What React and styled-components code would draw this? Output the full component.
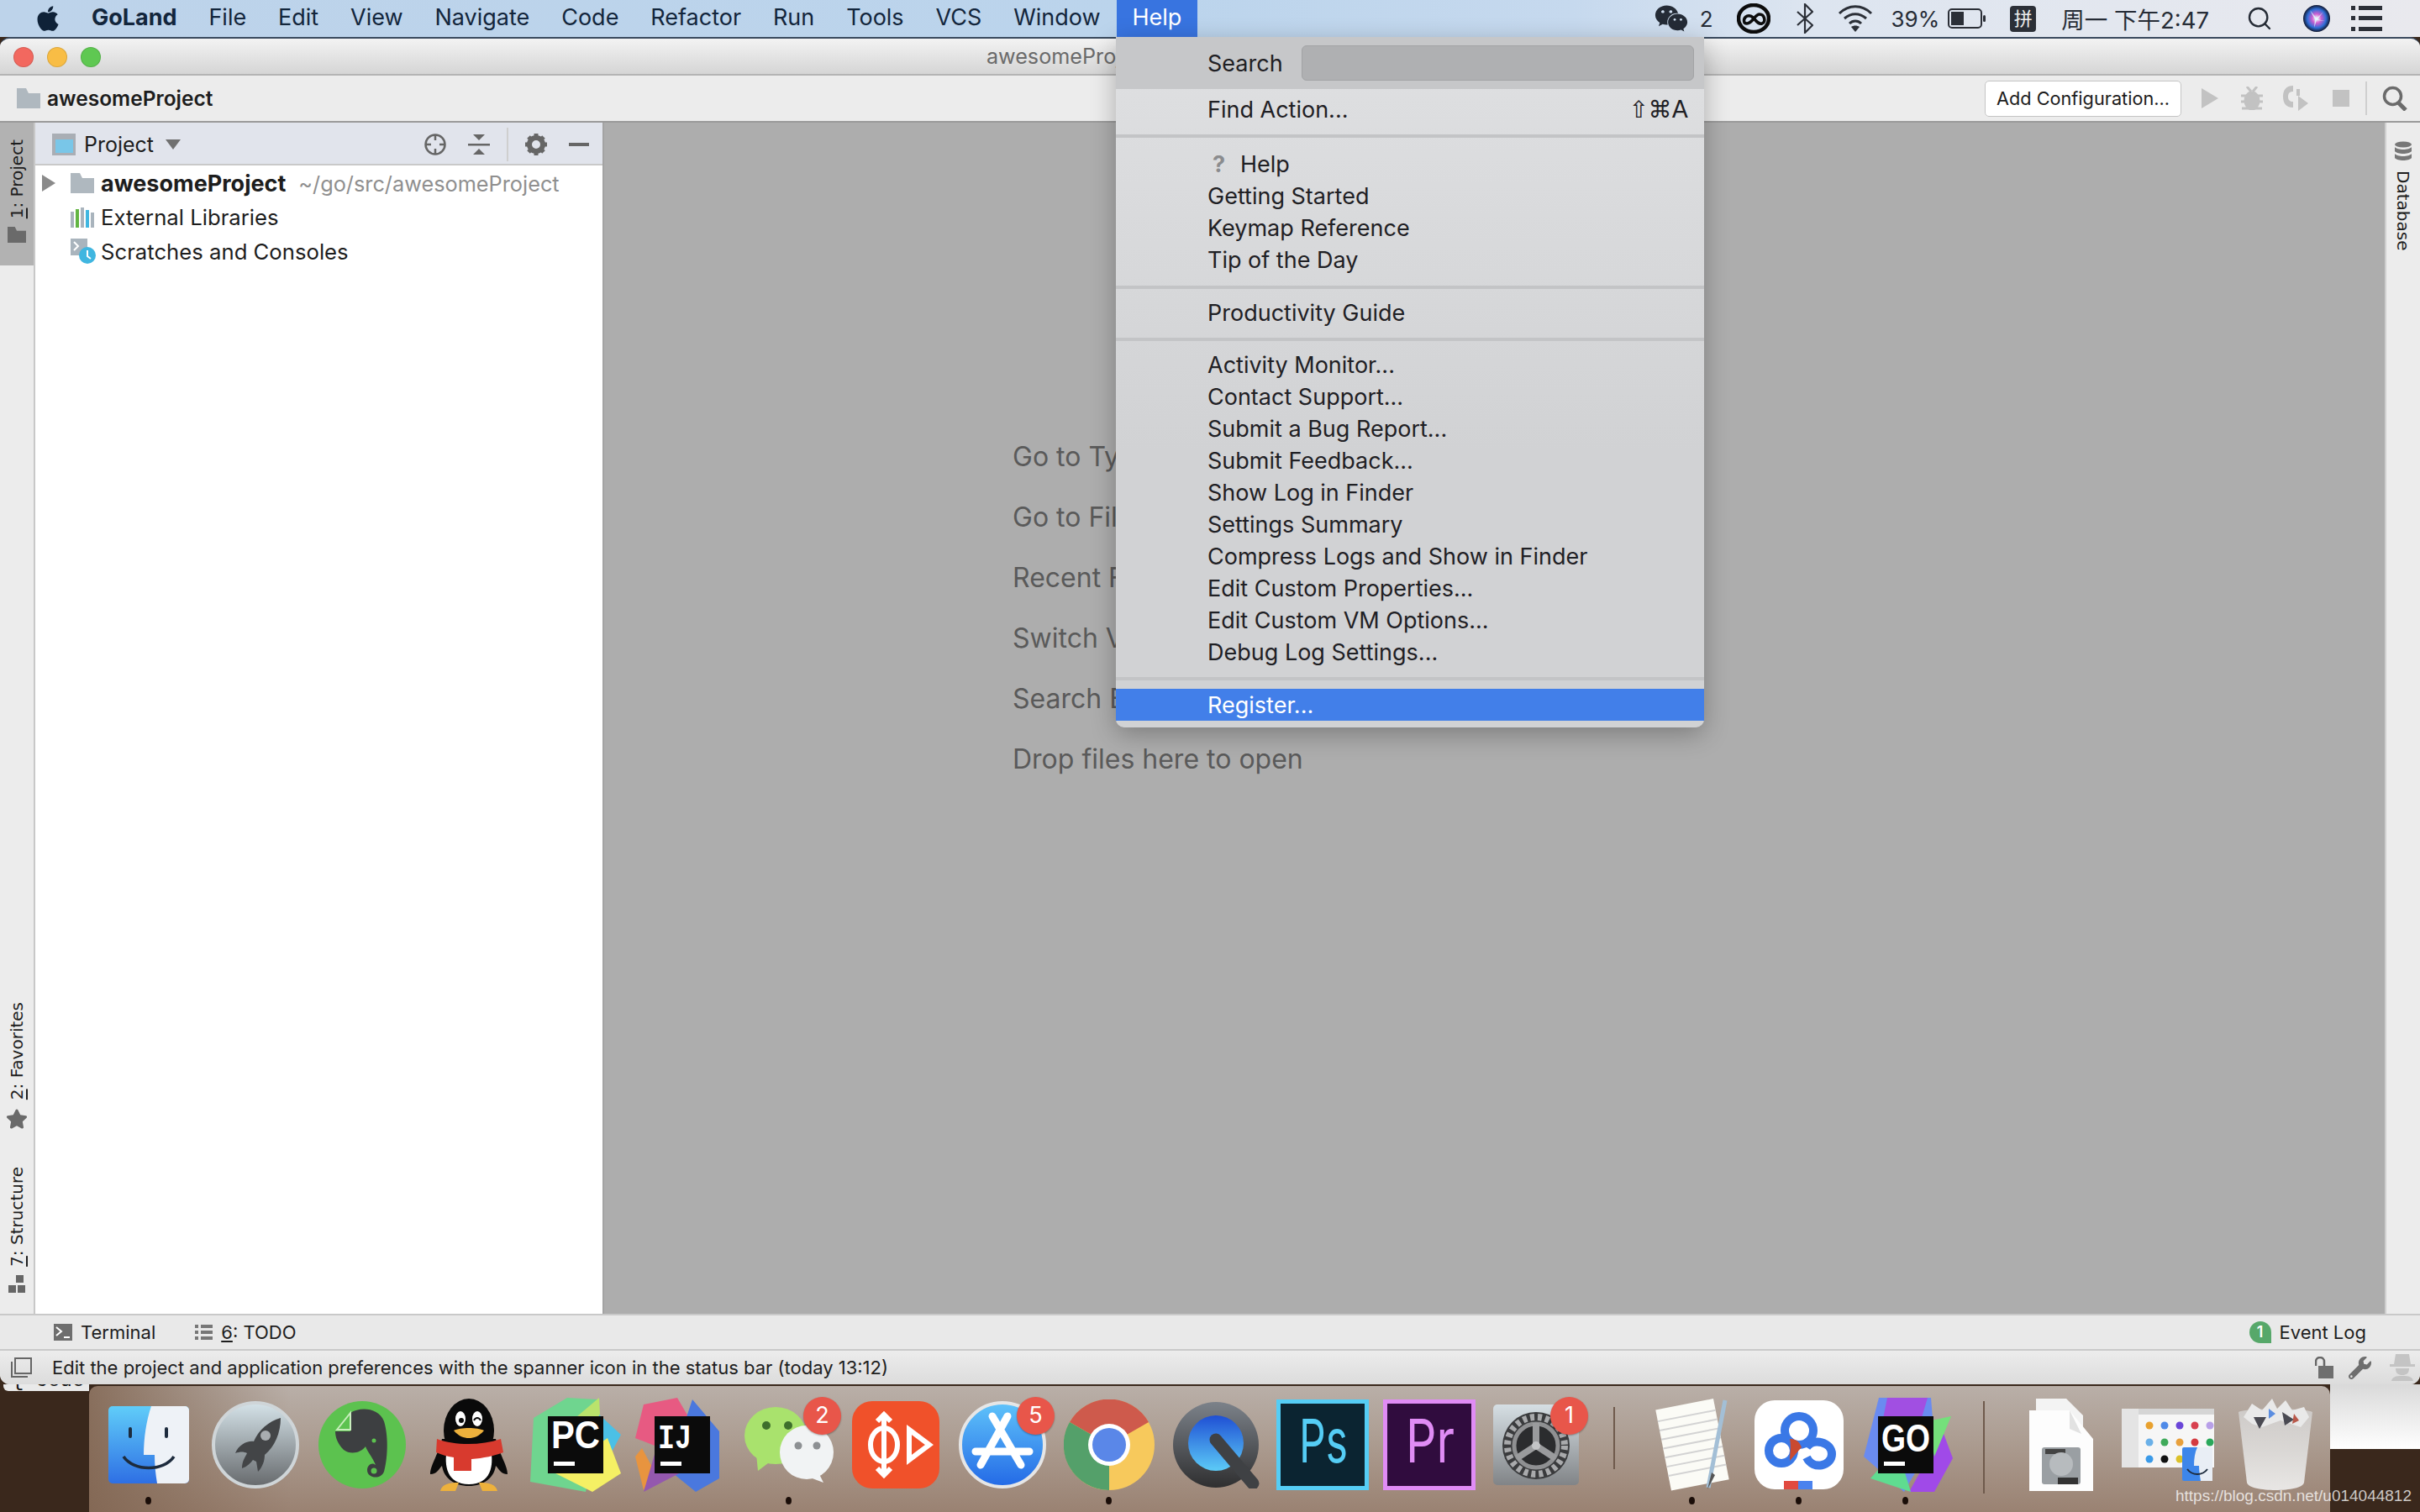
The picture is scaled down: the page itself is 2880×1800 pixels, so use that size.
import React from "react";
import styled, { createGlobalStyle } from "styled-components";
import { FaApple, FaWeixin, FaWrench, FaStar } from "react-icons/fa";
import { Search } from "lucide-react";

const GlobalStyle = createGlobalStyle`
  html, body { margin: 0; padding: 0; background: #3a281c; }
  * { box-sizing: border-box; }
  body { font-family: Inter, "Noto Sans CJK SC", sans-serif; }
`;

const Desktop = styled.div`
  position: relative;
  width: 2880px;
  height: 1800px;
  overflow: hidden;
  display: flex;
  flex-direction: column;
`;

/* ---- mac menu bar ---- */
const MenuBar = styled.header`
  height: 44px;
  flex: none;
  display: flex;
  align-items: center;
  padding-left: 40px;
  background: linear-gradient(90deg, #bdd3ea 0%, #bbd4ec 48%, #c6d9ee 65%, #dde5f0 75%, #e9e9ee 100%);
  color: #13263c;
  font-size: 27px;
`;
const AppleBox = styled.span`
  display: flex;
  width: 50px;
  font-size: 34px;
  color: #0f2238;
`;
const MenuItem = styled.span`
  height: 44px;
  line-height: 42px;
  padding: 0 18.94px;
  font-weight: ${(p) => (p.$bold ? 700 : 400)};
  background: ${(p) => (p.$active ? "#3874e0" : "transparent")};
  color: ${(p) => (p.$active ? "#fff" : "inherit")};
`;
const Tray = styled.div`
  margin-left: auto;
  display: flex;
  align-items: center;
  height: 44px;
  padding-right: 45px;
  color: #262c36;
  font-size: 26px;
`;
const TrayItem = styled.span`
  display: flex;
  align-items: center;
  margin-left: ${(p) => p.$gap}px;
  white-space: nowrap;
`;
const ClockText = styled.span`
  font-size: 27.5px;
`;
const ImeBox = styled.span`
  width: 31px;
  height: 31px;
  border-radius: 4px;
  background: #2b2f37;
  color: #eee;
  font-size: 22px;
  text-align: center;
  line-height: 30px;
`;

/* ---- ide window ---- */
const Window = styled.main`
  flex: none;
  height: 1604px;
  display: flex;
  flex-direction: column;
  background: #ececec;
  border-top: 2px solid #39495d;
  border-radius: 12px;
  overflow: hidden;
`;
const TitleBar = styled.div`
  position: relative;
  flex: none;
  height: 44px;
  display: flex;
  align-items: center;
  justify-content: center;
  background: linear-gradient(180deg, #f3f3f3, #d5d5d5);
  border-bottom: 2px solid #b4b4b4;
  color: #6b6b6b;
  font-size: 25.2px;
`;
const Lights = styled.div`
  position: absolute;
  left: 16px;
  top: 10px;
  display: flex;
  gap: 16px;
`;
const Light = styled.span`
  width: 24px;
  height: 24px;
  border-radius: 50%;
  background: ${(p) => p.$color};
  box-shadow: inset 0 0 0 1px rgba(0, 0, 0, 0.12);
`;
const Toolbar = styled.div`
  flex: none;
  height: 56px;
  display: flex;
  align-items: center;
  padding-left: 20px;
  background: #ececec;
  border-bottom: 2px solid #9a9a9a;
`;
const Crumb = styled.span`
  margin-left: 8px;
  font-size: 24.5px;
  font-weight: 600;
  color: #1d1d1d;
`;
const ToolbarRight = styled.div`
  margin-left: auto;
  display: flex;
  align-items: center;
  padding-right: 15px;
`;
const ConfigButton = styled.button`
  width: 234px;
  height: 43px;
  padding: 0;
  background: #fff;
  border: 1px solid #c4c4c4;
  border-radius: 5px;
  font: 400 21.7px Inter, sans-serif;
  color: #1c1c1c;
`;
const ToolIcon = styled.span`
  display: flex;
  margin-left: ${(p) => p.$gap}px;
`;
const VDivider = styled.span`
  width: 2px;
  height: 40px;
  background: #cfcfcf;
  margin: 0 ${(p) => p.$right}px 0 ${(p) => p.$left}px;
`;

const Body = styled.div`
  flex: 1;
  min-height: 0;
  display: flex;
`;
const Stripe = styled.aside`
  flex: none;
  width: 42px;
  background: #ececec;
  display: flex;
  flex-direction: column;
  ${(p) => (p.$right ? "border-left: 2px solid #cfcfcf;" : "border-right: 2px solid #c8c8c8;")}
`;
const StripeTab = styled.div`
  display: flex;
  flex-direction: column-reverse;
  align-items: center;
  gap: 10px;
  width: 40px;
  padding: 20px 0 ${(p) => p.$pb ?? 0}px;
  background: ${(p) => (p.$active ? "#b2b2b2" : "transparent")};
`;
const StripeBottom = styled.div`
  margin-top: auto;
  display: flex;
  flex-direction: column;
`;
const StripeLabel = styled.span`
  writing-mode: vertical-rl;
  transform: rotate(180deg);
  font: 400 20px "DejaVu Sans", sans-serif;
  color: #1e1e1e;
  white-space: nowrap;
`;
const RightTab = styled.div`
  display: flex;
  flex-direction: column;
  align-items: center;
  gap: 11px;
  padding-top: 22px;
`;
const RightLabel = styled.span`
  writing-mode: vertical-rl;
  font: 400 20px "DejaVu Sans", sans-serif;
  color: #1e1e1e;
`;
const Panel = styled.section`
  flex: none;
  width: 677px;
  display: flex;
  flex-direction: column;
  background: #fff;
  border-right: 2px solid #a3a3a3;
`;
const PanelHead = styled.div`
  flex: none;
  height: 51px;
  display: flex;
  align-items: center;
  padding: 2px 0 0 20px;
  background: #e1e4ec;
  border-bottom: 2px solid #c9c9c9;
  font-size: 25px;
  color: #1c1c1c;
`;
const PanelTitle = styled.span`
  margin-left: 10px;
`;
const PanelTools = styled.div`
  margin-left: auto;
  display: flex;
  align-items: center;
  padding-right: 16px;
`;
const Tree = styled.div`
  padding-top: 1px;
`;
const TreeRow = styled.div`
  height: 40.5px;
  display: flex;
  align-items: center;
  padding-left: ${(p) => (p.$root ? 8 : 42)}px;
  color: #1d1d1d;
  white-space: nowrap;
`;
const TreeArrow = styled.span`
  width: 0;
  height: 0;
  margin-right: 18px;
  border-left: 16px solid #8a8a8a;
  border-top: 10px solid transparent;
  border-bottom: 10px solid transparent;
`;
const TreeName = styled.span`
  margin-left: ${(p) => p.$left ?? 8}px;
  font-weight: ${(p) => (p.$bold ? 700 : 400)};
  font-size: ${(p) => (p.$bold ? 27 : 25.7)}px;
`;
const TreePath = styled.span`
  margin-left: 15px;
  font-size: 25.3px;
  color: #8f8f8f;
`;
const Editor = styled.div`
  flex: 1;
  background: #adadad;
  display: flex;
  flex-direction: column;
  gap: 34px;
  padding: 379px 0 0 486px;
  font-size: 32px;
  line-height: 38px;
  color: #5a5a5a;
`;
const ToolWindowBar = styled.div`
  flex: none;
  height: 42px;
  display: flex;
  align-items: center;
  padding: 0 64px;
  background: #e9e9e9;
  border-top: 2px solid #c9c9c9;
  font-size: 22px;
  color: #1e1e1e;
`;
const BarItem = styled.span`
  display: flex;
  align-items: center;
  gap: 10px;
  margin-left: ${(p) => p.$left};
`;
const EventBadge = styled.span`
  width: 26px;
  height: 26px;
  border-radius: 50% 50% 0 50%;
  background: #57a86a;
  color: #fff;
  font-size: 18px;
  font-weight: 600;
  text-align: center;
  line-height: 26px;
`;
const StatusBar = styled.footer`
  flex: none;
  height: 42px;
  display: flex;
  align-items: center;
  padding-left: 12px;
  background: linear-gradient(180deg, #ececec, #dcdcdc);
  border-top: 2px solid #c9c9c9;
  font-size: 22px;
  color: #202020;
`;
const StatusText = styled.span`
  margin-left: 24px;
`;
const StatusIcons = styled.div`
  margin-left: auto;
  display: flex;
  align-items: center;
  gap: 18px;
  padding-right: 2px;
`;

/* ---- help menu ---- */
const HelpMenu = styled.nav`
  position: absolute;
  left: 1328px;
  top: 44px;
  width: 700px;
  height: 822px;
  background: linear-gradient(180deg, #dfe0e2 0%, #d1d2d4 60%, #d1d2d4 100%);
  border-radius: 0 0 10px 10px;
  box-shadow: 0 8px 30px rgba(0, 0, 0, 0.28);
  color: #1f2024;
  font-size: 27px;
  z-index: 2;
`;
const MenuSearch = styled.div`
  height: 62px;
  display: flex;
  align-items: center;
  padding: 0 12px 0 109px;
  background: #c6c7c9;
`;
const SearchField = styled.div`
  margin-left: 22px;
  flex: 1;
  height: 42px;
  border-radius: 6px;
  background: #afb0b2;
  border: 1px solid #a2a3a5;
`;
const MenuGroup = styled.div`
  padding: ${(p) => p.$top}px 0 ${(p) => p.$bottom}px;
`;
const MenuSep = styled.div`
  height: 4px;
  background: #c3c4c6;
`;
const MenuRow = styled.div`
  height: 38px;
  display: flex;
  align-items: center;
  padding: 0 19px 0 109px;
  white-space: nowrap;
  background: ${(p) => (p.$selected ? "#427fe9" : "transparent")};
  color: ${(p) => (p.$selected ? "#fff" : "inherit")};
`;
const HelpMark = styled.span`
  width: 39px;
  padding-left: 6px;
  font-weight: 700;
  color: #8b8c8e;
`;
const Shortcut = styled.span`
  margin-left: auto;
  font-family: "DejaVu Sans", sans-serif;
  font-size: 28px;
`;

/* ---- dock ---- */
const Wallpaper = styled.div`
  position: relative;
  flex: 1;
  background: linear-gradient(180deg, #d9d9d9, #fff) right top / 107px 77px no-repeat, #3a281c;
`;
const BackWindow = styled.div`
  position: absolute;
  left: 4px;
  top: 0;
  width: 102px;
  height: 8px;
  overflow: hidden;
  background: #e9e9e9;
  border-radius: 0 0 0 6px;
  font: 24px/1 "Liberation Mono", monospace;
  color: #111;
  padding-left: 10px;
`;
const BackText = styled.div`
  margin-top: -16px;
`;
const Dock = styled.div`
  margin: 2px 0 0 106px;
  width: 2667px;
  height: 150px;
  display: flex;
  padding-left: 7px;
  border-radius: 10px 10px 0 0;
  background:
    linear-gradient(90deg, rgba(128, 100, 80, 0.85) 0, rgba(128, 100, 80, 0) 9%),
    linear-gradient(180deg, #b9afa8 0%, #ad9e93 40%, #9a8272 100%);
`;
const DockCell = styled.div`
  position: relative;
  flex: none;
  width: 127px;
  display: flex;
  flex-direction: column;
  align-items: center;
`;
const DockIconBox = styled.div`
  height: 132px;
  padding-top: 8px;
  display: flex;
  align-items: center;
  justify-content: center;
`;
const RunDot = styled.span`
  width: 7px;
  height: 9px;
  border-radius: 50%;
  background: #1a0d08;
`;
const DockBadge = styled.span`
  position: absolute;
  left: 81px;
  top: 13px;
  width: 45px;
  height: 45px;
  border-radius: 50%;
  background: #e8564a;
  color: #fff;
  font-size: 27px;
  text-align: center;
  line-height: 44px;
  box-shadow: 0 1px 2px rgba(0, 0, 0, 0.3);
`;
const DockSep = styled.div`
  flex: none;
  width: 59px;
  display: flex;
  justify-content: center;
  align-items: center;
  padding-bottom: ${(p) => (p.$short ? 26 : 4)}px;
`;
const DockSepLine = styled.span`
  width: 2px;
  height: ${(p) => p.$h}px;
  background: #6f5a4c;
`;
const Watermark = styled.span`
  position: absolute;
  right: 10px;
  bottom: 8px;
  font: 19px "Liberation Sans", sans-serif;
  color: rgba(255, 255, 255, 0.75);
  z-index: 3;
`;

/* ---- small ide icons ---- */
const FolderIcon = ({ color = "#afb8bf", w = 28, h = 24 }) => (
  <svg width={w} height={h} viewBox="0 0 28 24">
    <path d="M0 0h11l3 6h14v18H0z" fill={color} />
  </svg>
);
const ViewIcon = () => (
  <svg width="28" height="26" viewBox="0 0 28 26">
    <rect width="28" height="26" fill="#a9aeb5" />
    <rect x="4" y="7" width="21" height="16" fill="#79c6e8" />
  </svg>
);
const SmallArrow = () => (
  <svg width="18" height="12" viewBox="0 0 18 12" style={{ marginLeft: 14 }}>
    <path d="M0 0h18l-9 12z" fill="#707070" />
  </svg>
);
const LocateIcon = () => (
  <svg width="26" height="26" viewBox="0 0 26 26" fill="none" stroke="#666" strokeWidth="2.5">
    <circle cx="13" cy="13" r="11.5" />
    <path d="M13 1v7M13 18v7M1 13h7M18 13h7" />
  </svg>
);
const CollapseIcon = () => (
  <svg width="26" height="24" viewBox="0 0 26 24" fill="#666">
    <path d="M6 0h14l-7 7zM0 11h26v2.500H0zM13 17l7 7H6z" />
  </svg>
);
const GearIcon = ({ size = 26, color = "#666" }) => (
  <svg width={size} height={size} viewBox="0 0 26 26">
    <circle cx="13" cy="13" r="8" fill="none" stroke={color} strokeWidth="6" />
    <path d="M13 0v26M0 13h26M4 4l18 18M22 4L4 22" stroke={color} strokeWidth="5" strokeDasharray="5 16" />
  </svg>
);
const MinusIcon = () => (
  <svg width="24" height="4" viewBox="0 0 24 4">
    <rect width="24" height="4" fill="#666" />
  </svg>
);
const LibIcon = () => (
  <svg width="28" height="24" viewBox="0 0 28 24">
    <rect x="0" y="5" width="4" height="19" fill="#a9b4bd" />
    <rect x="6" y="2" width="4" height="22" fill="#62b543" />
    <rect x="12" y="0" width="4" height="24" fill="#a9b4bd" />
    <rect x="18" y="3" width="4" height="21" fill="#40b6e0" />
    <rect x="24" y="6" width="4" height="18" fill="#a9b4bd" />
  </svg>
);
const ScratchIcon = () => (
  <svg width="30" height="30" viewBox="0 0 30 30">
    <rect width="20" height="20" fill="#a9b4bd" />
    <path d="M4 4l5 5-5 5" stroke="#fff" strokeWidth="2" fill="none" />
    <circle cx="20" cy="20" r="10" fill="#40b6e0" />
    <path d="M20 14v7l4 3" stroke="#fff" strokeWidth="2" fill="none" />
  </svg>
);
const PlayIcon = () => (
  <svg width="20" height="24" viewBox="0 0 20 24">
    <path d="M0 0l20 12L0 24z" fill="#c2c2c2" />
  </svg>
);
const BugIcon = () => (
  <svg width="26" height="28" viewBox="0 0 26 28" fill="none" stroke="#c2c2c2" strokeWidth="3">
    <ellipse cx="13" cy="17" rx="8" ry="10" fill="#c2c2c2" />
    <path d="M7 0l5 6M19 0l-5 6M0 11h26M0 18h26M1 26h24" />
  </svg>
);
const CoverIcon = () => (
  <svg width="32" height="30" viewBox="0 0 32 30">
    <path d="M12 0C3 0 0 6 0 13s3 13 12 13v-7c-4 0-6-2-6-6s2-6 6-6z" fill="#c2c2c2" />
    <path d="M16 4h4v8h-4zM18 12l12 9-12 9z" fill="#c2c2c2" />
  </svg>
);
const StopIcon = () => (
  <svg width="20" height="20" viewBox="0 0 20 20">
    <rect width="20" height="20" fill="#c2c2c2" />
  </svg>
);
const ToolSearchIcon = () => (
  <svg width="30" height="30" viewBox="0 0 30 30" fill="none" stroke="#6b6b6b">
    <circle cx="12.500" cy="12.500" r="10" strokeWidth="3.500" />
    <path d="M19 20l9 9" strokeWidth="5" />
  </svg>
);
const DbIcon = () => (
  <svg width="22" height="24" viewBox="0 0 22 24" fill="#777">
    <ellipse cx="11" cy="4" rx="10" ry="3.500" />
    <path d="M1 7c3 4 17 4 20 0v5c-3 4-17 4-20 0zM1 15c3 4 17 4 20 0v5c-3 4-17 4-20 0z" />
  </svg>
);
const StructureIcon = () => (
  <svg width="22" height="22" viewBox="0 0 22 22" fill="#666">
    <rect x="10" y="0" width="9" height="9" />
    <rect x="1" y="12" width="9" height="9" />
    <rect x="12" y="12" width="9" height="9" />
  </svg>
);
const TermIcon = () => (
  <svg width="22" height="20" viewBox="0 0 22 20">
    <rect width="22" height="20" fill="#6e6e6e" />
    <path d="M3 4l6 5-6 5" stroke="#fff" strokeWidth="2" fill="none" />
    <path d="M12 16h7" stroke="#fff" strokeWidth="2" />
  </svg>
);
const TodoIcon = () => (
  <svg width="21" height="18" viewBox="0 0 21 18" fill="#777">
    <rect width="4" height="4" />
    <rect x="7" width="14" height="4" />
    <rect y="7" width="4" height="4" />
    <rect x="7" y="7" width="14" height="4" />
    <rect y="14" width="4" height="4" />
    <rect x="7" y="14" width="14" height="4" />
  </svg>
);
const PagesIcon = () => (
  <svg width="26" height="24" viewBox="0 0 26 24" fill="none" stroke="#666" strokeWidth="2">
    <rect x="6" y="1" width="19" height="18" />
    <path d="M2 5v18h19" />
  </svg>
);
const LockIcon = () => (
  <svg width="22" height="26" viewBox="0 0 22 26">
    <path d="M1 11V6a5 5 0 0 1 10 0v5" fill="none" stroke="#666" strokeWidth="2.500" />
    <rect x="4" y="11" width="18" height="15" fill="#6e6e6e" />
  </svg>
);
const HectorIcon = () => (
  <svg width="38" height="32" viewBox="0 0 38 32" fill="#c4c4c4">
    <path d="M11 0h16l2 12h5v3H4v-3h5zM11 17h16c0 6-3 8-8 8s-8-2-8-8zM6 32c1-5 5-6 13-6s12 1 13 6z" />
  </svg>
);

/* ---- tray icons ---- */
const CloudIcon = () => (
  <svg width="40" height="36" viewBox="0 0 40 36" fill="none" stroke="#0c0c0c">
    <ellipse cx="20" cy="18" rx="18" ry="16" strokeWidth="4.500" />
    <path d="M9 23c-2-6 3-9 7-8 5 1 8 11 14 9 5-2 3-11-3-11-6 0-8 11-15 11-1 0-2 0-3-1z" strokeWidth="3.500" />
  </svg>
);
const BluetoothIcon = () => (
  <svg width="20" height="36" viewBox="0 0 20 36" fill="none" stroke="#2b2f37" strokeWidth="2.200">
    <path d="M1 10l18 16-9 9V1l9 9L1 26" />
  </svg>
);
const WifiIcon = () => (
  <svg width="42" height="32" viewBox="0 0 42 32" fill="none" stroke="#2b2f37" strokeWidth="3">
    <path d="M2 10c11-11 27-11 38 0M8 16c8-7 18-7 26 0M14 22c4-4 10-4 14 0" />
    <path d="M21 32l-5-6c3-2 7-2 10 0z" fill="#2b2f37" stroke="none" />
  </svg>
);
const BatteryIcon = () => (
  <svg width="46" height="24" viewBox="0 0 46 24">
    <rect x="1" y="1" width="39" height="22" rx="4" fill="none" stroke="#2b2f37" strokeWidth="2" />
    <rect x="4" y="4" width="15" height="16" fill="#2b2f37" />
    <rect x="42" y="8" width="3" height="8" rx="1.500" fill="#2b2f37" />
  </svg>
);
const SiriIcon = () => (
  <svg width="32" height="32" viewBox="0 0 32 32">
    <defs>
      <radialGradient id="siri">
        <stop offset="0" stopColor="#fff" />
        <stop offset="0.35" stopColor="#c95fd0" />
        <stop offset="0.7" stopColor="#2e6ed8" />
        <stop offset="1" stopColor="#10162e" />
      </radialGradient>
    </defs>
    <circle cx="16" cy="16" r="16" fill="url(#siri)" />
    <path d="M8 6l8 10 8-8-7 9 9 2-10-1-3 9 1-10z" fill="#dff" opacity="0.8" />
  </svg>
);
const ListIcon = () => (
  <svg width="37" height="30" viewBox="0 0 37 30" fill="#2b2f37">
    <rect y="0" width="5" height="5" />
    <rect x="9" y="0" width="28" height="5" />
    <rect y="12" width="5" height="5" />
    <rect x="9" y="12" width="28" height="5" />
    <rect y="25" width="5" height="5" />
    <rect x="9" y="25" width="28" height="5" />
  </svg>
);

/* ---- dock icons ---- */
const FinderIcon = () => (
  <svg width="96" height="92" viewBox="0 0 96 92">
    <defs>
      <linearGradient id="fb" x1="0" y1="0" x2="0" y2="1">
        <stop offset="0" stopColor="#60cdf9" />
        <stop offset="1" stopColor="#2e6fe4" />
      </linearGradient>
    </defs>
    <rect width="96" height="92" rx="5" fill="url(#fb)" />
    <path d="M51 0h40a5 5 0 0 1 5 5v82a5 5 0 0 1-5 5H58c-2-12-3-22-3-34H42c0-20 3-40 9-58z" fill="#eef2f7" />
    <rect x="24" y="25" width="4" height="13" rx="2" fill="#1d2b3d" />
    <rect x="67" y="25" width="4" height="13" rx="2" fill="#1d2b3d" />
    <path d="M18 60c12 18 48 18 60 0" fill="none" stroke="#1d2b3d" strokeWidth="3.500" />
  </svg>
);
const RocketIcon = () => (
  <svg width="104" height="104" viewBox="0 0 104 104">
    <defs>
      <linearGradient id="rk" x1="0" y1="0" x2="0" y2="1">
        <stop offset="0" stopColor="#d5e3e9" />
        <stop offset="1" stopColor="#66696c" />
      </linearGradient>
    </defs>
    <circle cx="52" cy="52" r="50" fill="url(#rk)" stroke="#cfd5d8" strokeWidth="4" />
    <path d="M82 20c-14 4-26 14-32 28-8-1-18 4-22 14 6-2 10-2 14 0-3 6-6 10-6 18 6-2 10-6 13-10l4 2 2 12c6-6 8-14 8-20 12-10 19-26 19-44z" fill="#434547" />
    <circle cx="64" cy="41" r="6" fill="#a9adb0" />
  </svg>
);
const EvernoteIcon = () => (
  <svg width="104" height="104" viewBox="0 0 104 104">
    <circle cx="52" cy="52" r="52" fill="#5cc24f" />
    <path d="M38 14C50 6 72 8 78 24c6 20 4 46 0 60-4 10-20 8-20-2 0-6 6-10 10-6-4-10-10-16-12-22-6 8-18 10-26 4-8-8-10-16-10-22h18z" fill="#3d3f41" />
    <path d="M22 34l16-20v20z" fill="#5cc24f" stroke="#c9eebd" strokeWidth="2" />
    <circle cx="66" cy="47" r="2.500" fill="#5cc24f" />
    <circle cx="66" cy="83" r="3.500" fill="#5cc24f" />
  </svg>
);
const QQIcon = () => (
  <svg width="92" height="110" viewBox="0 0 92 110">
    <ellipse cx="46" cy="38" rx="30" ry="38" fill="#0a0a0a" />
    <path d="M14 48C8 70 0 80 0 90c8 0 10-6 14-10 2 14 14 24 32 24s30-10 32-24c4 4 6 10 14 10 0-10-8-20-14-42z" fill="#0a0a0a" />
    <path d="M20 60h52c4 20 0 42-26 42S16 80 20 60z" fill="#fff" />
    <ellipse cx="36" cy="24" rx="6" ry="9" fill="#fff" />
    <ellipse cx="56" cy="24" rx="6" ry="9" fill="#fff" />
    <circle cx="37" cy="26" r="3" fill="#0a0a0a" />
    <path d="M52 26c2-4 6-4 8 0" fill="none" stroke="#0a0a0a" strokeWidth="2" />
    <path d="M28 38c8-4 28-4 36 0-6 7-12 9-18 9s-12-2-18-9z" fill="#edb13c" />
    <path d="M8 48c22 8 52 8 76 0l3 16c-10 4-24 7-38 8v14H28V70C20 69 14 67 7 64z" fill="#d83a2e" />
    <path d="M12 110c2-8 10-10 22-10l-4 10zM80 110c-2-8-10-10-22-10l4 10z" fill="#edb13c" />
  </svg>
);
const ProductIcon = ({ label, shapes, mono }) => (
  <svg width="112" height="112" viewBox="0 0 112 112">
    {shapes.map((s) => (
      <polygon key={s.p} points={s.p} fill={s.c} />
    ))}
    <rect x="23" y="22" width="66" height="68" fill="#0b0b0b" />
    <text
      x="27"
      y={label === "GO" ? 64 : 60}
      fontFamily={mono ? "Liberation Mono" : "Liberation Sans"}
      fontWeight="700"
      fontSize={label === "IJ" ? 40 : 46}
      fill="#fff"
      textLength={label === "IJ" ? 40 : 58}
      lengthAdjust="spacingAndGlyphs"
    >
      {label}
    </text>
    <rect x="30" y="76" width="25" height="5" fill="#fff" />
  </svg>
);
const pcShapes = [
  { p: "46,0 82,2 86,40 68,112 2,100 6,24", c: "#6fd58f" },
  { p: "58,22 84,0 86,40", c: "#b9e36c" },
  { p: "84,20 110,44 96,70 80,56", c: "#4bc0e6" },
  { p: "32,90 94,48 110,90 76,112", c: "#f5f064" },
];
const ijShapes = [
  { p: "10,8 50,0 64,24 46,66 0,48", c: "#e75a82" },
  { p: "68,2 100,40 100,96 72,112 40,86", c: "#4a78de" },
  { p: "8,60 22,86 10,110 0,70", c: "#e8943f" },
  { p: "10,112 28,50 60,86", c: "#9458ae" },
];
const goShapes = [
  { p: "24,0 86,0 90,50 54,112 6,70", c: "#6a8bf0" },
  { p: "34,0 82,0 70,40 28,30", c: "#a14fe2" },
  { p: "60,112 100,40 112,72 90,112", c: "#a04ae8" },
  { p: "82,28 110,22 90,70", c: "#74e07b" },
  { p: "14,96 46,60 62,112", c: "#5fdc90" },
];
const WeChatIcon = () => (
  <svg width="106" height="90" viewBox="0 0 106 90">
    <ellipse cx="37" cy="34" rx="37" ry="34" fill="#a9e26d" />
    <path d="M14 56l2 20 16-12z" fill="#a9e26d" />
    <circle cx="26" cy="22" r="5" fill="#3e6f2c" />
    <circle cx="52" cy="22" r="5" fill="#3e6f2c" />
    <ellipse cx="74" cy="54" rx="32" ry="32" fill="#f1f3f4" />
    <path d="M88 78l6 12-16-6z" fill="#f1f3f4" />
    <circle cx="64" cy="46" r="4.500" fill="#8d9093" />
    <circle cx="86" cy="46" r="4.500" fill="#8d9093" />
  </svg>
);
const MusicAppIcon = () => (
  <svg width="104" height="104" viewBox="0 0 104 104">
    <rect width="104" height="104" rx="24" fill="#f0512a" />
    <g fill="none" stroke="#fff" strokeWidth="6">
      <ellipse cx="38" cy="52" rx="16" ry="20" />
      <path d="M38 18v68M30 24l8-8 8 8M30 80l8 8 8-8" />
      <path d="M68 34l24 18-24 18z" />
    </g>
  </svg>
);
const AppStoreIcon = () => (
  <svg width="104" height="104" viewBox="0 0 104 104">
    <defs>
      <linearGradient id="as" x1="0" y1="0" x2="0" y2="1">
        <stop offset="0" stopColor="#5fc3fa" />
        <stop offset="1" stopColor="#2369e6" />
      </linearGradient>
    </defs>
    <circle cx="52" cy="52" r="50" fill="url(#as)" stroke="#e6e6e6" strokeWidth="4" />
    <g stroke="#fff" strokeWidth="9" strokeLinecap="round" fill="none">
      <path d="M26 76l32-58M40 18l34 58M20 60h64" />
    </g>
  </svg>
);
const ChromeIcon = () => (
  <svg width="108" height="108" viewBox="0 0 108 108">
    <circle cx="54" cy="54" r="54" fill="#f7c95c" />
    <path d="M54 54L7 27A54 54 0 0 1 101 27z" fill="#ce5a4c" />
    <path d="M54 54L7 27A54 54 0 0 0 54 108z" fill="#54a06a" />
    <circle cx="54" cy="54" r="25" fill="#fff" />
    <circle cx="54" cy="54" r="20" fill="#5a87e8" />
  </svg>
);
const QuickTimeIcon = () => (
  <svg width="104" height="104" viewBox="0 0 104 104">
    <defs>
      <linearGradient id="qb" x1="0" y1="0" x2="0" y2="1">
        <stop offset="0" stopColor="#1f4fd4" />
        <stop offset="1" stopColor="#5ccbf7" />
      </linearGradient>
      <linearGradient id="qr" x1="0" y1="0" x2="0" y2="1">
        <stop offset="0" stopColor="#7c828a" />
        <stop offset="1" stopColor="#2f2f30" />
      </linearGradient>
    </defs>
    <circle cx="52" cy="52" r="51" fill="url(#qr)" />
    <circle cx="52" cy="50" r="33" fill="url(#qb)" />
    <path d="M52 46l44 52" stroke="#3f4144" strokeWidth="15" strokeLinecap="round" />
  </svg>
);
const AdobeIcon = ({ label, bg, fg }) => (
  <svg width="110" height="108" viewBox="0 0 110 108">
    <rect x="2.500" y="2.500" width="105" height="103" fill={bg} stroke={fg} strokeWidth="5" />
    <text x="27" y="75" fontFamily="Inter, sans-serif" fontWeight="400" fontSize="72" fill={fg} textLength="58" lengthAdjust="spacingAndGlyphs">
      {label}
    </text>
  </svg>
);
const SysPrefIcon = () => (
  <svg width="102" height="96" viewBox="0 0 102 96">
    <defs>
      <linearGradient id="sp" x1="0" y1="0" x2="0" y2="1">
        <stop offset="0" stopColor="#d6dfe4" />
        <stop offset="1" stopColor="#818487" />
      </linearGradient>
    </defs>
    <rect width="102" height="96" rx="5" fill="url(#sp)" />
    <circle cx="51" cy="49" r="40" fill="#3a3b3d" />
    <circle cx="51" cy="49" r="34" fill="none" stroke="#a9aaac" strokeWidth="8" strokeDasharray="5 4" />
    <circle cx="51" cy="49" r="26" fill="#2b2c2e" stroke="#8f9092" strokeWidth="5" />
    <path d="M51 49V22M51 49L28 64M51 49l23 15" stroke="#9a9b9d" strokeWidth="8" />
    <circle cx="51" cy="49" r="5" fill="#c4c5c7" />
  </svg>
);
const TextEditIcon = () => (
  <svg width="94" height="110" viewBox="0 0 94 110">
    <g transform="rotate(-11 46 55)">
      <rect x="12" y="6" width="70" height="98" fill="#fbfbf6" />
      <path d="M12 20h70M12 31h70M12 42h70M12 53h70M12 64h70M12 75h70M12 86h70" stroke="#d3d3d3" strokeWidth="2" />
    </g>
    <path d="M86 2L66 106" stroke="#a3bfd6" strokeWidth="5" />
    <path d="M70 88l-5 20 9-17z" fill="#555" />
  </svg>
);
const BaiduIcon = () => (
  <svg width="106" height="106" viewBox="0 0 106 106">
    <rect width="106" height="106" rx="24" fill="#fff" />
    <g fill="none" stroke="#3a78e6" strokeWidth="10">
      <circle cx="53" cy="36" r="17" />
      <circle cx="32" cy="60" r="15" />
      <path d="M62 56c8-12 30-6 30 8s-22 20-30 4" />
    </g>
    <path d="M42 46c10 0 12 6 14 10L42 72c0-10 2-16 0-26z" fill="#c94a30" />
    <rect x="35" y="96" width="17" height="10" fill="#e14a3f" />
    <rect x="52" y="96" width="17" height="10" fill="#4a82ee" />
  </svg>
);
const DocFileIcon = () => (
  <svg width="78" height="110" viewBox="0 0 78 110">
    <path d="M8 0h36l20 20v40H8z" fill="#f3f3f3" />
    <path d="M0 14h48l28 34v62H0z" fill="#fdfdfd" />
    <path d="M48 14v22l14 6z" fill="#e2e2e2" />
    <rect x="15" y="58" width="46" height="44" rx="3" fill="#9a9fa3" />
    <rect x="19" y="60" width="24" height="6" fill="#444" />
    <circle cx="38" cy="78" r="14" fill="#b7bbbe" />
    <rect x="34" y="94" width="24" height="8" fill="#333" />
  </svg>
);
const miniColors = ["#e8a12f", "#4f8ae8", "#6a46d8", "#d8404f", "#b8a0e8", "#6ab0e8", "#3faa5a", "#e8a03c", "#d43a40", "#2aa85a", "#3a9ae8", "#111", "#dcc12a"];
const WindowStackIcon = () => (
  <svg width="112" height="86" viewBox="0 0 112 86">
    <rect width="110" height="70" fill="#f6f6f6" />
    <rect width="110" height="7" fill="#d5d5d5" />
    <rect width="20" height="70" fill="#e4e4e4" />
    {miniColors.map((c, i) => (
      <circle key={i} cx={33 + (i % 5) * 18} cy={20 + Math.floor(i / 5) * 20} r="4.500" fill={c} />
    ))}
    <g transform="translate(72 46)">
      <rect width="36" height="40" rx="2" fill="#3d86ea" />
      <path d="M18 0h18v40H22c-1-6-2-12-2-18h-6c0-8 1-16 4-22z" fill="#e9eef5" />
      <path d="M6 26c6 8 18 8 24 0" stroke="#1d2b3d" strokeWidth="2" fill="none" />
    </g>
  </svg>
);
const TrashIcon = () => (
  <svg width="88" height="110" viewBox="0 0 88 110">
    <defs>
      <linearGradient id="tr" x1="0" y1="0" x2="0" y2="1">
        <stop offset="0" stopColor="#cfccca" />
        <stop offset="0.5" stopColor="#dcdad8" />
        <stop offset="1" stopColor="#ecebea" />
      </linearGradient>
    </defs>
    <path d="M0 16c10-5 78-5 88 0l-10 84c-2 12-66 12-68 0z" fill="url(#tr)" opacity="0.95" />
    <path d="M6 22L16 6l12 8L40 0l6 12L56 2l8 12 14-4 6 12-10 12-24-8-22 8-12-4z" fill="#e9e9e9" />
    <path d="M18 22l7 14 8-14zM52 16l3 16 11-7z" fill="#4a4a52" />
    <path d="M36 12l8 6-8 6z" fill="#5b8de0" />
    <path d="M66 18l6 8-8 4z" fill="#b9584a" />
  </svg>
);

const renderMenuRow = (label) => <MenuRow key={label}>{label}</MenuRow>;

const menuNames = ["File", "Edit", "View", "Navigate", "Code", "Refactor", "Run", "Tools", "VCS", "Window"];
const helpGroup = ["Getting Started", "Keymap Reference", "Tip of the Day"];
const supportGroup = [
  "Activity Monitor...",
  "Contact Support...",
  "Submit a Bug Report...",
  "Submit Feedback...",
  "Show Log in Finder",
  "Settings Summary",
  "Compress Logs and Show in Finder",
  "Edit Custom Properties...",
  "Edit Custom VM Options...",
  "Debug Log Settings...",
];
const editorHints = ["Go to Type", "Go to File", "Recent Files", "Switch View", "Search Everywhere", "Drop files here to open"];

export default function App() {
  return (
    <Desktop>
      <GlobalStyle />
      <MenuBar>
        <AppleBox>
          <FaApple />
        </AppleBox>
        <MenuItem $bold>GoLand</MenuItem>
        {menuNames.map((name) => (
          <MenuItem key={name}>{name}</MenuItem>
        ))}
        <MenuItem $active>Help</MenuItem>
        <Tray>
          <TrayItem $gap={0}>
            <FaWeixin size={40} color="#242b36" />
          </TrayItem>
          <TrayItem $gap={14}>2</TrayItem>
          <TrayItem $gap={28}>
            <CloudIcon />
          </TrayItem>
          <TrayItem $gap={31}>
            <BluetoothIcon />
          </TrayItem>
          <TrayItem $gap={29}>
            <WifiIcon />
          </TrayItem>
          <TrayItem $gap={22}>39%</TrayItem>
          <TrayItem $gap={10}>
            <BatteryIcon />
          </TrayItem>
          <TrayItem $gap={28}>
            <ImeBox>拼</ImeBox>
          </TrayItem>
          <TrayItem $gap={30}>
            <ClockText>周一 下午2:47</ClockText>
          </TrayItem>
          <TrayItem $gap={44}>
            <Search size={32} strokeWidth={1.8} />
          </TrayItem>
          <TrayItem $gap={36}>
            <SiriIcon />
          </TrayItem>
          <TrayItem $gap={25}>
            <ListIcon />
          </TrayItem>
        </Tray>
      </MenuBar>

      <Window>
        <TitleBar>
          <Lights>
            <Light $color="#f2685f" />
            <Light $color="#f8bd45" />
            <Light $color="#5fc852" />
          </Lights>
          awesomeProject [~/go/src/awesomeProject]
        </TitleBar>
        <Toolbar>
          <FolderIcon />
          <Crumb>awesomeProject</Crumb>
          <ToolbarRight>
            <ConfigButton>Add Configuration...</ConfigButton>
            <ToolIcon $gap={24}>
              <PlayIcon />
            </ToolIcon>
            <ToolIcon $gap={27}>
              <BugIcon />
            </ToolIcon>
            <ToolIcon $gap={24}>
              <CoverIcon />
            </ToolIcon>
            <ToolIcon $gap={27}>
              <StopIcon />
            </ToolIcon>
            <VDivider $left={19} $right={18} />
            <ToolSearchIcon />
          </ToolbarRight>
        </Toolbar>

        <Body>
          <Stripe>
            <StripeTab $active $pb={27}>
              <FolderIcon color="#6a6a6a" w={22} h={19} />
              <StripeLabel>
                <u>1</u>: Project
              </StripeLabel>
            </StripeTab>
            <StripeBottom>
              <StripeTab $pb={24}>
                <FaStar size={26} color="#6a6a6a" />
                <StripeLabel>
                  <u>2</u>: Favorites
                </StripeLabel>
              </StripeTab>
              <StripeTab $pb={24}>
                <StructureIcon />
                <StripeLabel>
                  <u>7</u>: Structure
                </StripeLabel>
              </StripeTab>
            </StripeBottom>
          </Stripe>
          <Panel>
            <PanelHead>
              <ViewIcon />
              <PanelTitle>Project</PanelTitle>
              <SmallArrow />
              <PanelTools>
                <LocateIcon />
                <ToolIcon $gap={26}>
                  <CollapseIcon />
                </ToolIcon>
                <VDivider $left={20} $right={20} />
                <GearIcon />
                <ToolIcon $gap={26}>
                  <MinusIcon />
                </ToolIcon>
              </PanelTools>
            </PanelHead>
            <Tree>
              <TreeRow $root>
                <TreeArrow />
                <FolderIcon />
                <TreeName $bold>awesomeProject</TreeName>
                <TreePath>~/go/src/awesomeProject</TreePath>
              </TreeRow>
              <TreeRow>
                <LibIcon />
                <TreeName>External Libraries</TreeName>
              </TreeRow>
              <TreeRow>
                <ScratchIcon />
                <TreeName $left={6}>Scratches and Consoles</TreeName>
              </TreeRow>
            </Tree>
          </Panel>
          <Editor>
            {editorHints.map((hint) => (
              <span key={hint}>{hint}</span>
            ))}
          </Editor>
          <Stripe $right>
            <RightTab>
              <DbIcon />
              <RightLabel>Database</RightLabel>
            </RightTab>
          </Stripe>
        </Body>

        <ToolWindowBar>
          <BarItem $left="0">
            <TermIcon />
            Terminal
          </BarItem>
          <BarItem $left="47px">
            <TodoIcon />
            <span>
              <u>6</u>: TODO
            </span>
          </BarItem>
          <BarItem $left="auto">
            <EventBadge>1</EventBadge>
            Event Log
          </BarItem>
        </ToolWindowBar>
        <StatusBar>
          <PagesIcon />
          <StatusText>Edit the project and application preferences with the spanner icon in the status bar (today 13:12)</StatusText>
          <StatusIcons>
            <LockIcon />
            <FaWrench size={27} color="#6e6e6e" />
            <HectorIcon />
          </StatusIcons>
        </StatusBar>
      </Window>

      <Wallpaper>
        <BackWindow>
          <BackText>{"{ code"}</BackText>
        </BackWindow>
        <Dock>
          <DockCell>
            <DockIconBox><FinderIcon /></DockIconBox>
            <RunDot />
          </DockCell>
          <DockCell><DockIconBox><RocketIcon /></DockIconBox></DockCell>
          <DockCell><DockIconBox><EvernoteIcon /></DockIconBox></DockCell>
          <DockCell><DockIconBox><QQIcon /></DockIconBox></DockCell>
          <DockCell><DockIconBox><ProductIcon label="PC" shapes={pcShapes} /></DockIconBox></DockCell>
          <DockCell><DockIconBox><ProductIcon label="IJ" shapes={ijShapes} mono /></DockIconBox></DockCell>
          <DockCell>
            <DockIconBox><WeChatIcon /></DockIconBox>
            <RunDot />
            <DockBadge>2</DockBadge>
          </DockCell>
          <DockCell><DockIconBox><MusicAppIcon /></DockIconBox></DockCell>
          <DockCell>
            <DockIconBox><AppStoreIcon /></DockIconBox>
            <DockBadge>5</DockBadge>
          </DockCell>
          <DockCell>
            <DockIconBox><ChromeIcon /></DockIconBox>
            <RunDot />
          </DockCell>
          <DockCell><DockIconBox><QuickTimeIcon /></DockIconBox></DockCell>
          <DockCell><DockIconBox><AdobeIcon label="Ps" bg="#0b2431" fg="#55cdf5" /></DockIconBox></DockCell>
          <DockCell><DockIconBox><AdobeIcon label="Pr" bg="#300c3e" fg="#e08cf5" /></DockIconBox></DockCell>
          <DockCell>
            <DockIconBox><SysPrefIcon /></DockIconBox>
            <DockBadge>1</DockBadge>
          </DockCell>
          <DockSep $short><DockSepLine $h={74} /></DockSep>
          <DockCell>
            <DockIconBox><TextEditIcon /></DockIconBox>
            <RunDot />
          </DockCell>
          <DockCell>
            <DockIconBox><BaiduIcon /></DockIconBox>
            <RunDot />
          </DockCell>
          <DockCell>
            <DockIconBox><ProductIcon label="GO" shapes={goShapes} /></DockIconBox>
            <RunDot />
          </DockCell>
          <DockSep><DockSepLine $h={110} /></DockSep>
          <DockCell><DockIconBox><DocFileIcon /></DockIconBox></DockCell>
          <DockCell><DockIconBox><WindowStackIcon /></DockIconBox></DockCell>
          <DockCell><DockIconBox><TrashIcon /></DockIconBox></DockCell>
        </Dock>
      </Wallpaper>

      <HelpMenu>
        <MenuSearch>
          Search
          <SearchField />
        </MenuSearch>
        <MenuGroup $top={5} $bottom={11}>
          <MenuRow>
            Find Action...
            <Shortcut>⇧⌘A</Shortcut>
          </MenuRow>
        </MenuGroup>
        <MenuSep />
        <MenuGroup $top={12} $bottom={12}>
          <MenuRow>
            <HelpMark>?</HelpMark>
            Help
          </MenuRow>
          {helpGroup.map(renderMenuRow)}
        </MenuGroup>
        <MenuSep />
        <MenuGroup $top={9} $bottom={11}>
          <MenuRow>Productivity Guide</MenuRow>
        </MenuGroup>
        <MenuSep />
        <MenuGroup $top={9} $bottom={11}>
          {supportGroup.map(renderMenuRow)}
        </MenuGroup>
        <MenuSep />
        <MenuGroup $top={10} $bottom={8}>
          <MenuRow $selected>Register...</MenuRow>
        </MenuGroup>
      </HelpMenu>
      <Watermark>https://blog.csdn.net/u014044812</Watermark>
    </Desktop>
  );
}
